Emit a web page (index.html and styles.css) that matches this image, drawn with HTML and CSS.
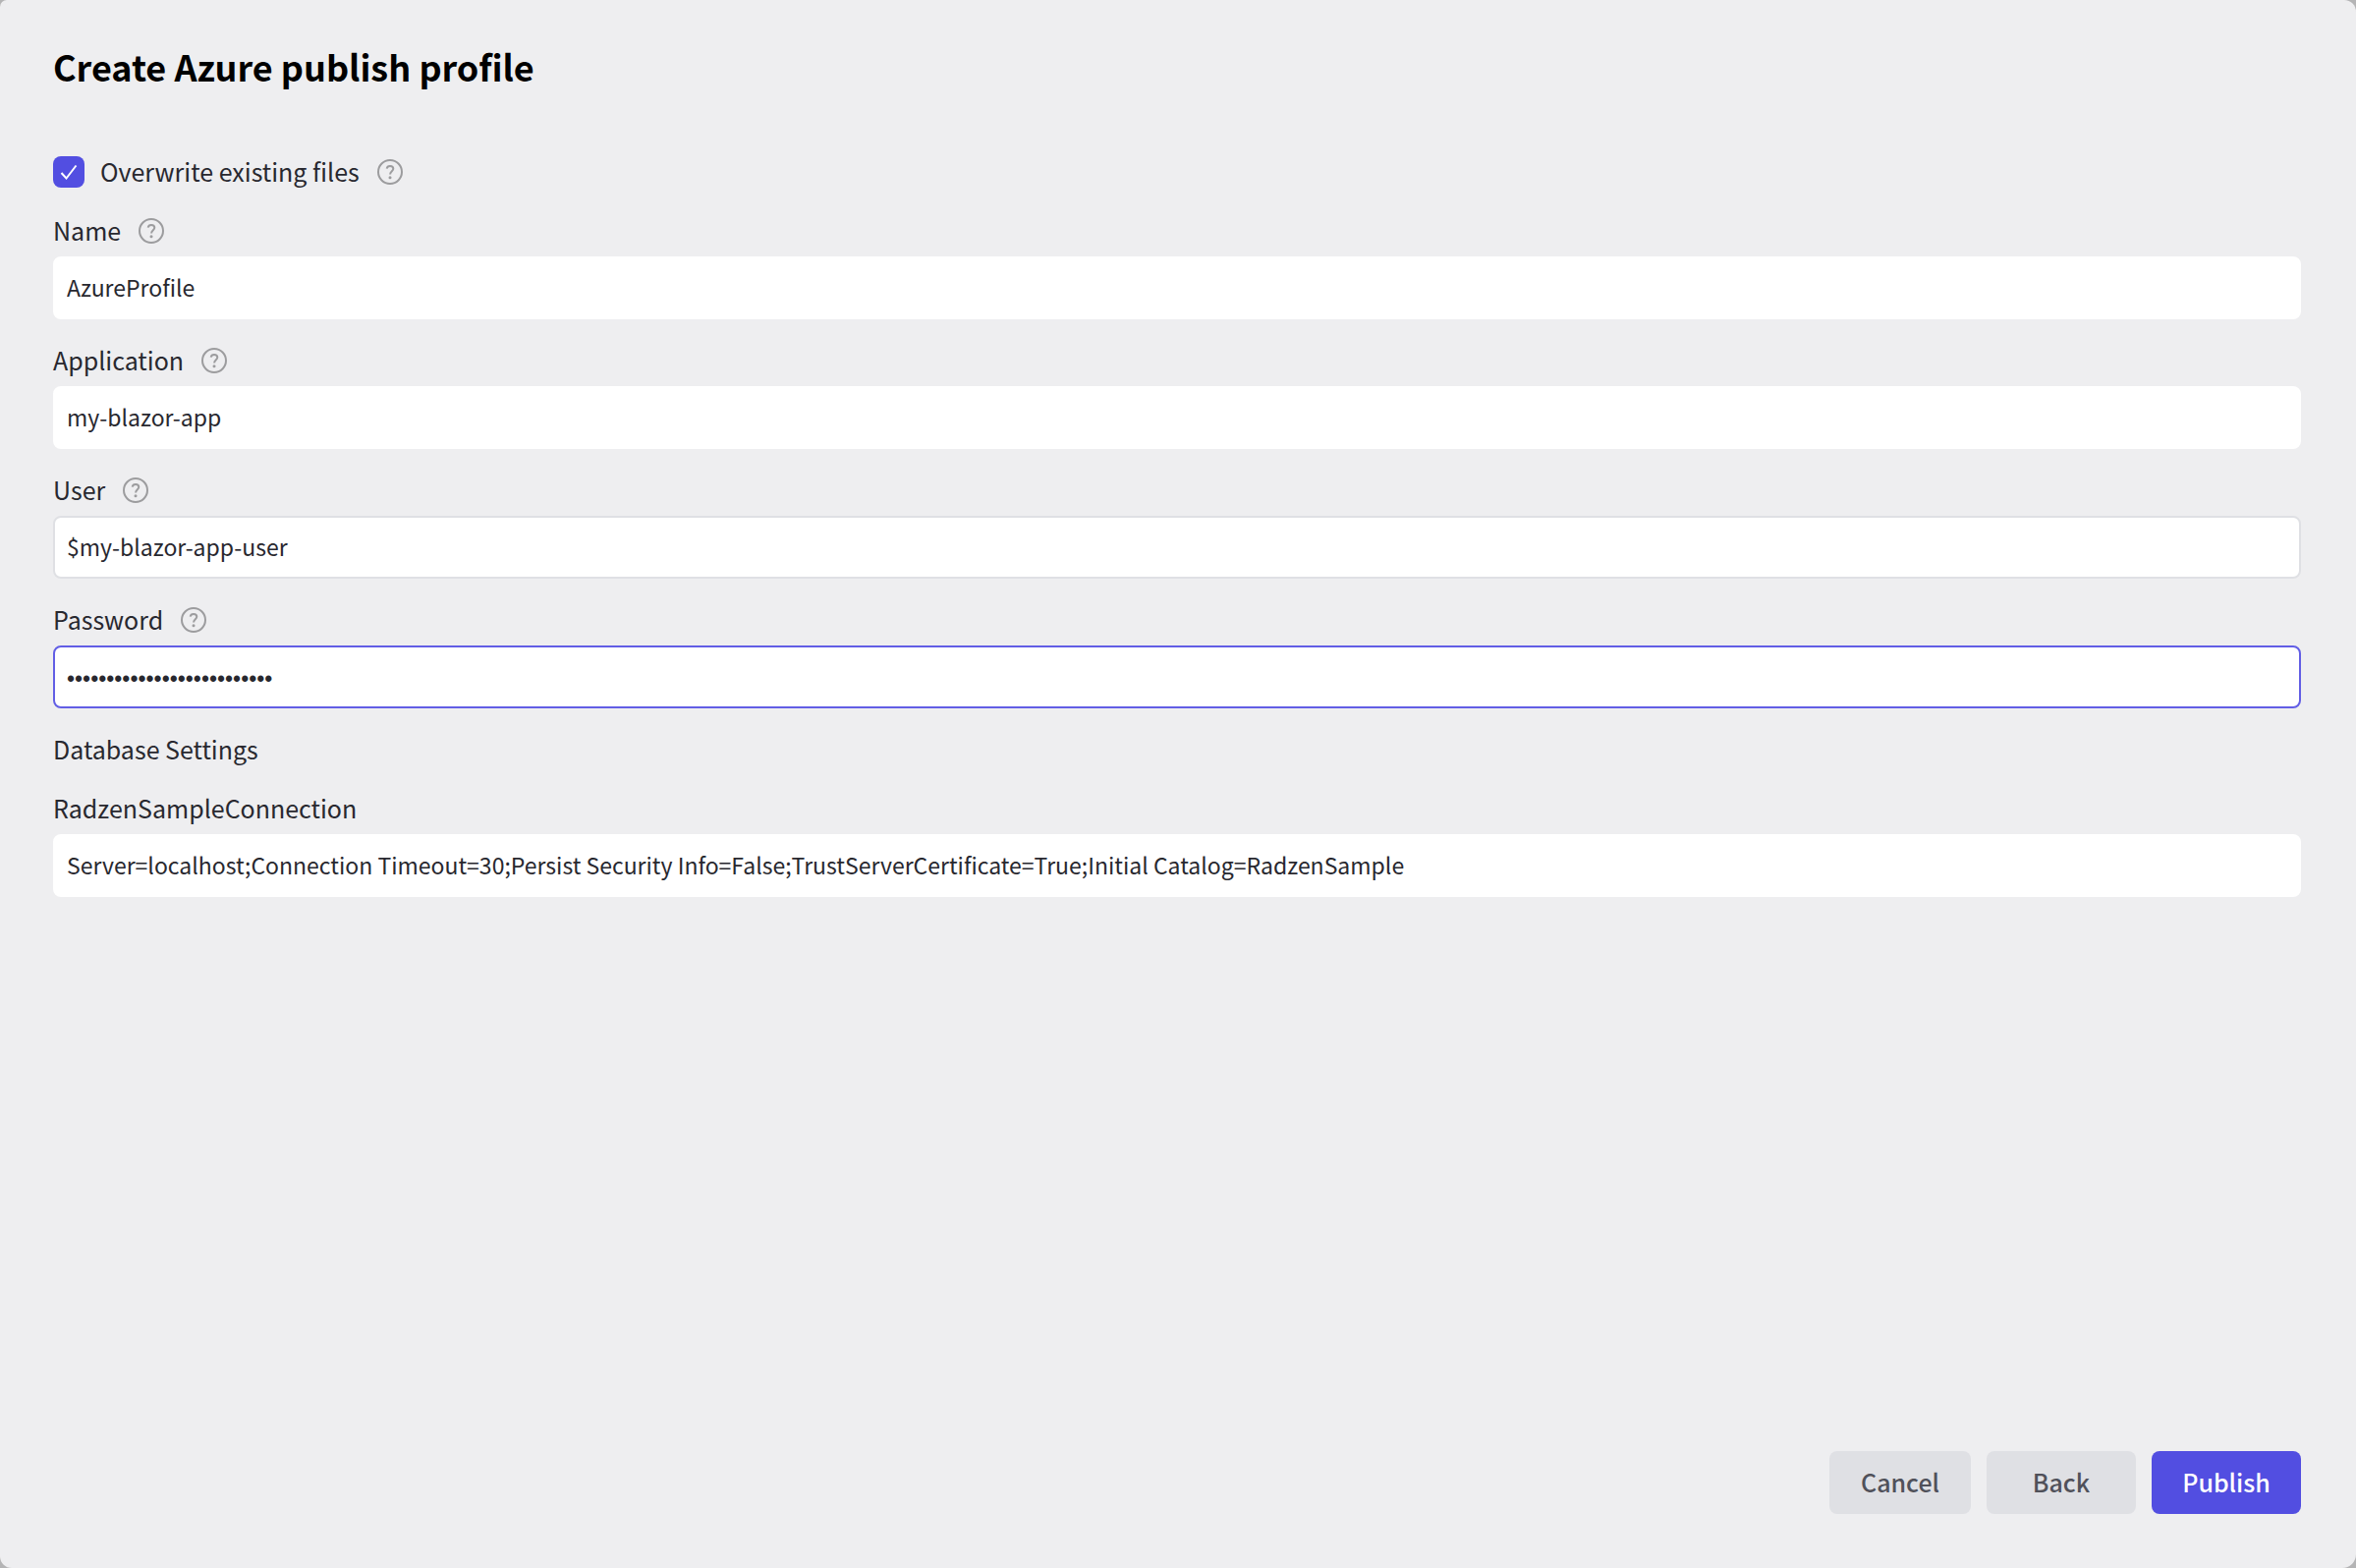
FILE: index.html
```html
<!DOCTYPE html>
<html lang="en">
<head>
<meta charset="utf-8">
<meta name="viewport" content="width=device-width, initial-scale=1">
<title>Create Azure publish profile</title>
<link rel="stylesheet" href="styles.css">
</head>
<body>
<svg class="sprite" aria-hidden="true">
  <symbol id="help" viewBox="0 0 26 26">
    <circle cx="13" cy="13" r="12" fill="none" stroke="currentColor" stroke-width="2"/>
    <path d="M9.7 9.6C10 7.8 11.3 7 13 7c1.900 0 3.300 1 3.300 2.800 0 2.400-3.200 2.600-3.200 5.700" fill="none" stroke="currentColor" stroke-width="2"/>
    <circle cx="13" cy="18.800" r="1.500" fill="currentColor"/>
  </symbol>
</svg>
<form class="dialog">
  <h1 class="dialog-title">Create Azure publish profile</h1>
  <div class="fields">
    <div class="row">
      <span class="check">
        <input class="check-box" type="checkbox" id="overwrite" checked>
        <svg class="check-mark" viewBox="0 0 32 32" aria-hidden="true"><path d="M8.500 17l5 5.500L23.500 9.500"/></svg>
      </span>
      <label class="label" for="overwrite">Overwrite existing files</label>
      <svg class="help"><use href="#help"/></svg>
    </div>
    <div class="field">
      <div class="row"><label class="label" for="name">Name</label><svg class="help"><use href="#help"/></svg></div>
      <input class="input" type="text" id="name" value="AzureProfile">
    </div>
    <div class="field">
      <div class="row"><label class="label" for="application">Application</label><svg class="help"><use href="#help"/></svg></div>
      <input class="input" type="text" id="application" value="my-blazor-app">
    </div>
    <div class="field">
      <div class="row"><label class="label" for="user">User</label><svg class="help"><use href="#help"/></svg></div>
      <input class="input input-hover" type="text" id="user" value="$my-blazor-app-user">
    </div>
    <div class="field">
      <div class="row"><label class="label" for="password">Password</label><svg class="help"><use href="#help"/></svg></div>
      <input class="input input-password input-active" type="password" id="password" value="abcdefghijklmnopqrstuvwxyz">
    </div>
    <div class="row"><h2 class="label section-title">Database Settings</h2></div>
    <div class="field">
      <div class="row"><label class="label" for="connection">RadzenSampleConnection</label></div>
      <input class="input" type="text" id="connection" value="Server=localhost;Connection Timeout=30;Persist Security Info=False;TrustServerCertificate=True;Initial Catalog=RadzenSample">
    </div>
  </div>
  <div class="actions">
    <button class="button" type="button">Cancel</button>
    <button class="button button-wide" type="button">Back</button>
    <button class="button button-wide button-primary" type="submit">Publish</button>
  </div>
</form>
</body>
</html>
```
FILE: styles.css
```css
* {
  box-sizing: border-box;
}

body {
  margin: 0;
  background: #b4b4b5;
  color: #28282f;
  font-family: "Noto Sans CJK SC", sans-serif;
  font-size: 25px;
  line-height: 36px;
}

.sprite {
  position: absolute;
  width: 0;
  height: 0;
}

.dialog {
  display: flex;
  flex-direction: column;
  min-height: 100vh;
  padding: 41px 56px 55px 54px;
  border-radius: 7px 12px 14px 12px;
  background: #eeeef0;
}

.dialog-title {
  margin: 0 0 64px;
  color: #000;
  font-size: 36px;
  font-weight: 700;
  line-height: 52px;
}

.fields {
  display: flex;
  flex: 1;
  flex-direction: column;
  gap: 24px;
}

.field {
  display: flex;
  flex-direction: column;
  gap: 8px;
}

.row {
  display: flex;
  align-items: center;
  height: 36px;
}

.label {
  padding-bottom: 2px;
}

.help {
  width: 26px;
  height: 26px;
  margin-left: 18px;
  color: #9c9c9e;
}

.check {
  display: grid;
  width: 32px;
  height: 32px;
  margin-right: 16px;
}

.check-box {
  grid-area: 1 / 1;
  width: 32px;
  height: 32px;
  margin: 0;
  appearance: none;
  border-radius: 8px;
  background: #524ee1;
}

.check-mark {
  grid-area: 1 / 1;
  fill: none;
  stroke: #fff;
  stroke-width: 2;
  pointer-events: none;
}

.check-box:not(:checked) + .check-mark {
  visibility: hidden;
}

.input {
  width: 100%;
  height: 64px;
  padding: 0 12px 2px;
  border: 2px solid #fff;
  border-radius: 8px;
  outline: none;
  background: #fff;
  color: #28282f;
  font-family: inherit;
  font-size: 23px;
}

.input-password {
  padding: 4px 12px 0;
  font-family: "Liberation Sans", sans-serif;
}

.input-hover {
  border-color: #dfe0e4;
}

.input-active,
.input:focus {
  border-color: #625ee5;
}

.section-title {
  margin: 0;
  font-size: 25px;
  font-weight: 400;
}

.actions {
  display: flex;
  justify-content: flex-end;
  gap: 16px;
}

.button {
  min-width: 144px;
  height: 64px;
  padding: 0 16px 2px;
  border: 0;
  border-radius: 8px;
  background: #dfe0e4;
  color: #50515a;
  font-family: inherit;
  font-size: 25px;
  font-weight: 500;
}

.button-wide {
  min-width: 152px;
}

.button-primary {
  background: #524ee1;
  color: #fff;
}
```
